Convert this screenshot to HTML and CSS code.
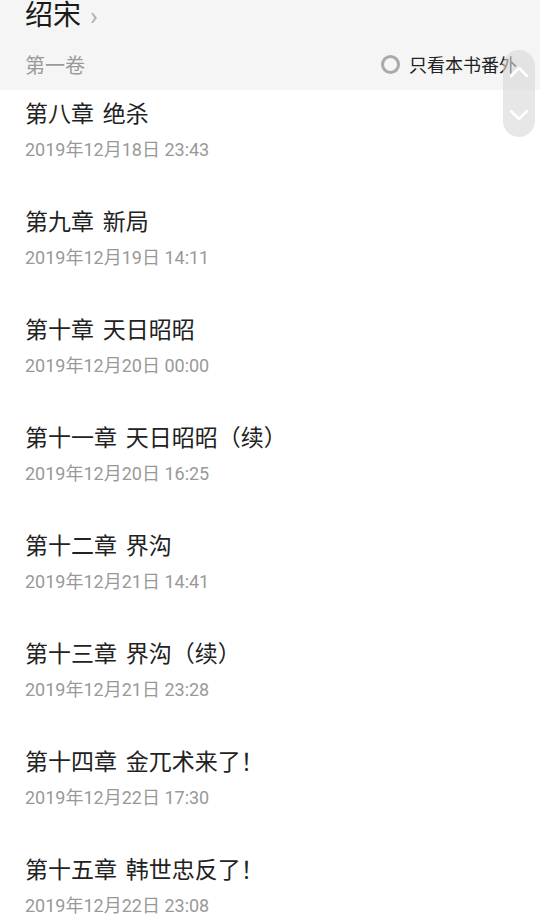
FILE: index.html
```html
<!DOCTYPE html>
<html lang="zh-CN">
<head>
    <meta charset="UTF-8">
    <meta name="viewport" content="width=device-width, initial-scale=1.0">
    <title>绍宋 目录</title>
    <link rel="stylesheet" href="styles.css">
</head>
<body>
    <div class="header">
        <div class="book-title">绍宋 <span class="arrow">&rsaquo;</span></div>
        <div class="volume-row">
            <span class="volume">第一卷</span>
            <label class="extra">
                <span class="radio"></span>
                只看本书番外
            </label>
        </div>
    </div>

    <ul class="chapters">
        <li><div class="name">第八章 绝杀</div><div class="date">2019年12月18日 23:43</div></li>
        <li><div class="name">第九章 新局</div><div class="date">2019年12月19日 14:11</div></li>
        <li><div class="name">第十章 天日昭昭</div><div class="date">2019年12月20日 00:00</div></li>
        <li><div class="name">第十一章 天日昭昭（续）</div><div class="date">2019年12月20日 16:25</div></li>
        <li><div class="name">第十二章 界沟</div><div class="date">2019年12月21日 14:41</div></li>
        <li><div class="name">第十三章 界沟（续）</div><div class="date">2019年12月21日 23:28</div></li>
        <li><div class="name">第十四章 金兀术来了！</div><div class="date">2019年12月22日 17:30</div></li>
        <li><div class="name">第十五章 韩世忠反了！</div><div class="date">2019年12月22日 23:08</div></li>
    </ul>

    <!-- 快速滚动按钮 -->
    <div class="scroller">
        <svg width="20" height="12" viewBox="0 0 20 12"><polyline points="2,10 10,2 18,10" fill="none" stroke="#fff" stroke-width="2.5" stroke-linecap="round" stroke-linejoin="round"/></svg>
        <svg width="20" height="12" viewBox="0 0 20 12"><polyline points="2,2 10,10 18,2" fill="none" stroke="#fff" stroke-width="2.5" stroke-linecap="round" stroke-linejoin="round"/></svg>
    </div>
</body>
</html>
```

FILE: styles.css
```css
body {
    margin: 0;
    width: 540px;
    height: 918px;
    overflow: hidden;
    background-color: #ffffff;
    font-family: Roboto, "Noto Sans CJK SC", sans-serif;
    color: #222222;
    position: relative;
}
.header {
    background-color: #f5f5f5;
    height: 90px;
    padding: 0 25px;
    box-sizing: border-box;
}
.book-title {
    font-size: 28px;
    line-height: 32px;
    height: 32px;
    color: #1a1a1a;
}
.arrow {
    color: #b0b0b0;
    font-size: 26px;
    margin-left: 2px;
}
.volume-row {
    display: flex;
    justify-content: space-between;
    align-items: center;
    margin-top: 18px;
    height: 28px;
}
.volume {
    font-size: 20px;
    color: #9a9a9a;
}
.extra {
    display: flex;
    align-items: center;
    font-size: 18px;
    color: #222222;
    margin-right: -2px;
}
.radio {
    width: 13px;
    height: 13px;
    border: 3px solid #aaaaaa;
    border-radius: 50%;
    margin-right: 9px;
}
.chapters {
    list-style: none;
    margin: 0;
    padding: 0 25px;
}
.chapters li {
    height: 108px;
    padding-top: 10px;
    box-sizing: border-box;
}
.name {
    font-size: 23px;
    line-height: 30px;
    word-spacing: 3px;
}
.date {
    margin-top: 8px;
    font-size: 18px;
    line-height: 24px;
    color: #999999;
}
.scroller {
    position: absolute;
    left: 503px;
    top: 50px;
    width: 32px;
    height: 87px;
    border-radius: 16px;
    background-color: rgba(215, 215, 215, 0.6);
    display: flex;
    flex-direction: column;
    justify-content: space-around;
    align-items: center;
}
```
